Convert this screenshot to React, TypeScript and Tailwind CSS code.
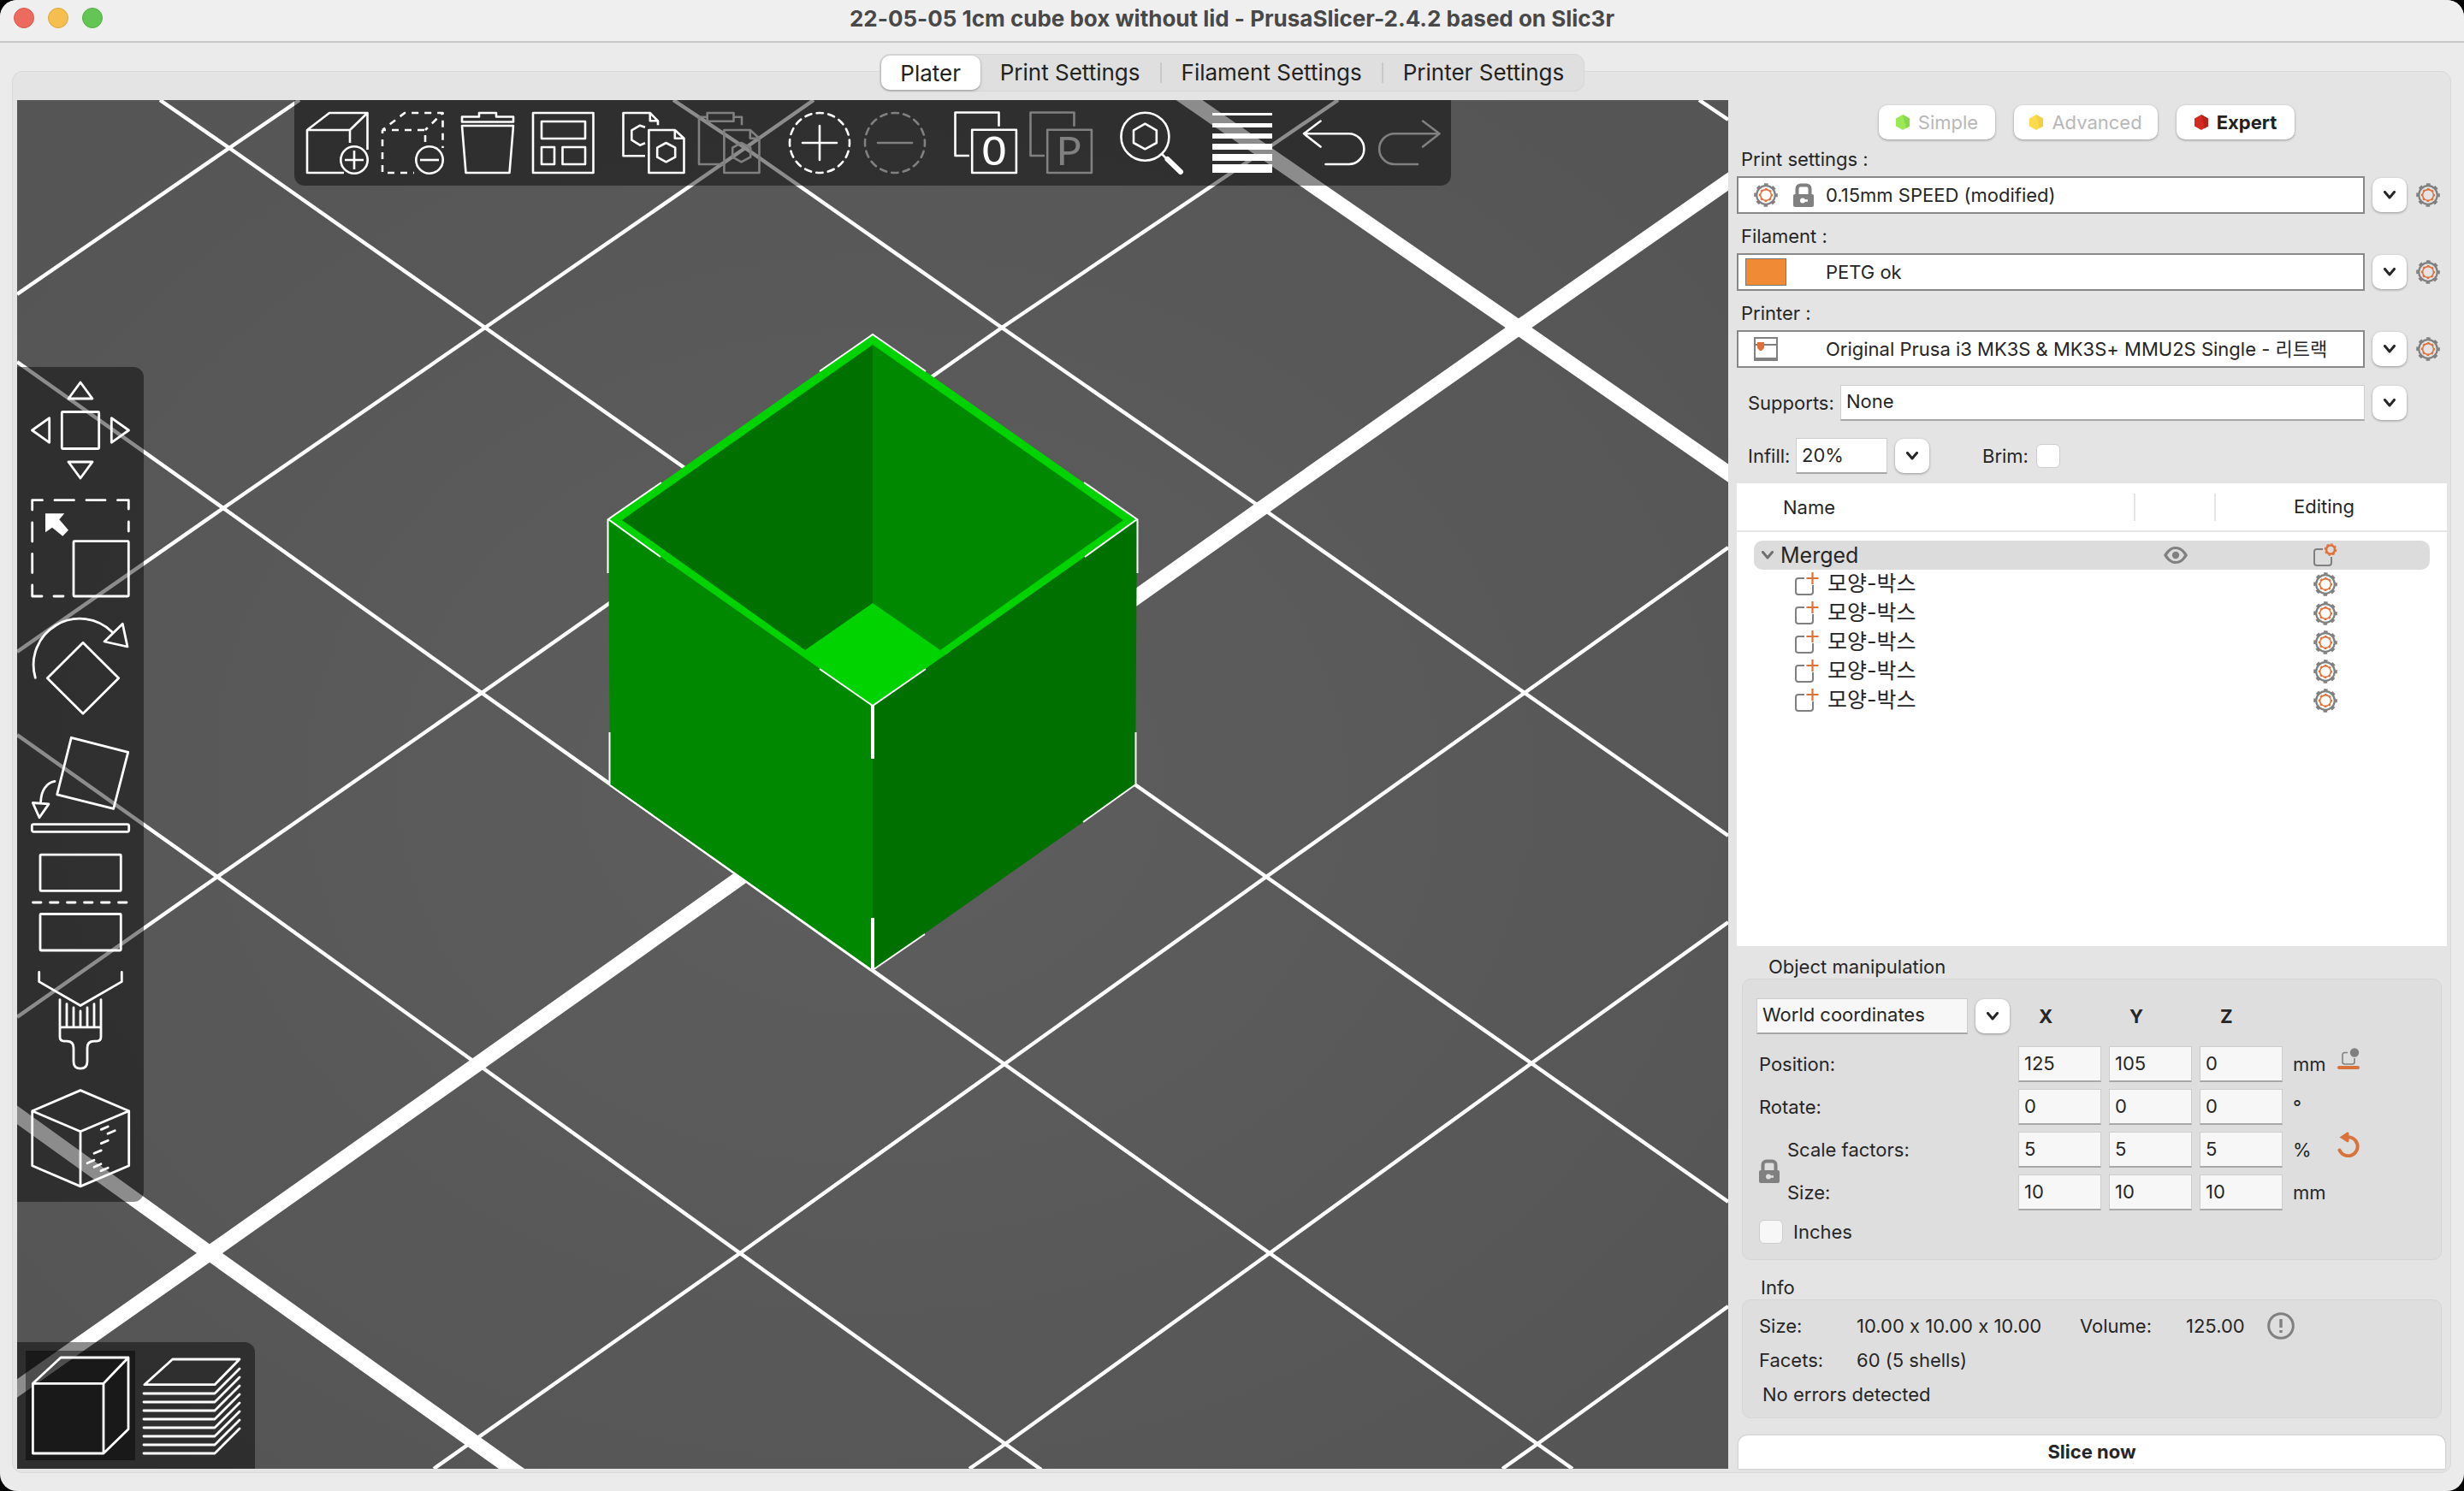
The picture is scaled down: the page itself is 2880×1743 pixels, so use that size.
import type { ReactNode } from 'react'
import clsx from 'clsx'

interface IconProps {
  children: ReactNode
  className?: string
}

/* ---------- Icons ---------- */

function TopIcon({ children, className }: IconProps) {
  return (
    <svg
      viewBox="0 0 72 72"
      className={clsx('size-[72px] overflow-visible', className)}
      fill="none"
      stroke="currentColor"
      strokeWidth="2.6"
      strokeLinejoin="round"
      aria-hidden
    >
      {children}
    </svg>
  )
}

function GizmoIcon({ children }: IconProps) {
  return (
    <svg
      viewBox="0 0 120 120"
      className="size-[120px] overflow-visible"
      fill="none"
      stroke="currentColor"
      strokeWidth="2.8"
      strokeLinecap="round"
      strokeLinejoin="round"
      aria-hidden
    >
      {children}
    </svg>
  )
}

const HEX = 'M50.5 36 61.2 41.7V52.7L50.5 58.3 40.2 52.7V41.7Z'
const PAGE = 'M60.8 21H30.4V71H71.5V30.7ZM60.8 21V30.7H71.5'

function Gear() {
  return (
    <svg viewBox="0 0 28 28" className="size-7 shrink-0" fill="none" aria-hidden>
      <circle cx="14" cy="14" r="10.8" stroke="#808080" strokeWidth="2.2" />
      <circle cx="14" cy="14" r="12.6" stroke="#808080" strokeWidth="2.4" strokeDasharray="4.6 5.296" strokeDashoffset="2.3" />
      <circle cx="14" cy="14" r="6.4" stroke="#e0703a" strokeWidth="1.6" />
      <circle cx="14" cy="14" r="7.4" stroke="#e0703a" strokeWidth="1.4" strokeDasharray="2.6 3.212" strokeDashoffset="1.3" />
    </svg>
  )
}

function Lock({ hole }: { hole: string }) {
  return (
    <svg viewBox="0 0 24 28" className="h-7 w-6 shrink-0" aria-hidden>
      <path d="M4.5 14V6.5a4 4 0 0 1 4-4h7a4 4 0 0 1 4 4V14" fill="none" stroke="#808080" strokeWidth="4" />
      <rect y="13" width="24" height="15" rx="2" fill="#808080" />
      <circle cx="11" cy="20.5" r="3" fill={hole} />
      <rect x="12" y="19.2" width="5" height="2.6" fill={hole} />
    </svg>
  )
}

function PrinterGlyph() {
  return (
    <svg viewBox="0 0 28 28" className="size-7 shrink-0" fill="none" aria-hidden>
      <path d="M1 0V28M27 0V28M0 1H28M1 9H27" stroke="#808080" strokeWidth="2" />
      <path d="M0 26H28" stroke="#808080" strokeWidth="4" />
      <path d="M4 6H12V13L9 16H7L4 13Z" fill="#e0703a" />
    </svg>
  )
}

function Eye() {
  return (
    <svg viewBox="0 0 28 20" className="h-5 w-7" aria-hidden>
      <path d="M0 10C4 3 9 0 14 0s10 3 14 10c-4 7-9 10-14 10S4 17 0 10Z" fill="#808080" />
      <path d="M4 10C7 5 10 3 14 3s7 2 10 7c-3 5-6 7-10 7S7 15 4 10Z" fill="#dcdcdc" />
      <circle cx="14" cy="10" r="4.2" fill="#808080" />
    </svg>
  )
}

function ObjectGlyph() {
  return (
    <svg viewBox="0 0 28 28" className="size-7" fill="none" aria-hidden>
      <path d="M11 7H4a3 3 0 0 0-3 3v13a3 3 0 0 0 3 3h14a3 3 0 0 0 3-3V16" stroke="#808080" strokeWidth="2" />
      <circle cx="20" cy="7.5" r="5" stroke="#e0703a" strokeWidth="2.6" />
      <circle cx="20" cy="7.5" r="6.6" stroke="#e0703a" strokeWidth="1.4" strokeDasharray="2.6 2.58" />
    </svg>
  )
}

function PartGlyph() {
  return (
    <svg viewBox="0 0 28 28" className="size-7" fill="none" aria-hidden>
      <path d="M11 7H4a3 3 0 0 0-3 3v13a3 3 0 0 0 3 3h14a3 3 0 0 0 3-3V15" stroke="#808080" strokeWidth="2" />
      <path d="M20.5 0V14M13.5 7H27.5" stroke="#e0703a" strokeWidth="2.2" />
    </svg>
  )
}

function DropToBedGlyph() {
  return (
    <svg viewBox="0 0 26 26" className="size-[26px]" fill="none" aria-hidden>
      <path d="M12 5.5H8.5A2.500 2.500 0 0 0 6 8v8.500A2.500 2.500 0 0 0 8.500 19h9A2.500 2.500 0 0 0 20 16.500V12" stroke="#808080" strokeWidth="1.6" />
      <circle cx="20" cy="5.5" r="5.2" fill="#808080" />
      <path d="M2 23H24" stroke="#d9733c" strokeWidth="4" strokeLinecap="round" />
    </svg>
  )
}

function ResetGlyph() {
  return (
    <svg viewBox="0 0 26 30" className="h-[30px] w-[26px]" fill="none" aria-hidden>
      <path d="M10 6.5A11 11 0 1 1 2.5 21.5" stroke="#d9733c" strokeWidth="4" strokeLinecap="round" />
      <path d="M2.5 6.5 11.5 .5Q13.5 0 13.5 2V11Q13 13 11 12Z" fill="#d9733c" />
    </svg>
  )
}

function Chevron({ className }: { className?: string }) {
  return (
    <svg viewBox="0 0 14 10" className={clsx('h-[10px] w-[14px]', className)} fill="none" aria-hidden>
      <path d="M1.5 1.5 7 8 12.5 1.5" stroke="currentColor" strokeWidth="3" strokeLinecap="round" strokeLinejoin="round" />
    </svg>
  )
}

/* ---------- 3D scene ---------- */

const THIN_LINES = [
  'M0 742 234 908 845 1348 1155 1571 1197 1601',
  'M0 306 241 477 543 693 1154 1127 1464 1348 1777 1571 1818 1600',
  'M167 0 248 56 547 266 1460 908 1770 1126 2000 1288',
  'M767 0 851 56 1151 266 1455 477 1762 693 2000 860',
  'M1966 0 2000 23',
  'M0 227 248 56 330 0',
  'M0 645 241 477 547 266 851 56 931 0',
  'M0 1072 234 908 543 693 1151 266 1462 56 1544 0',
  'M487 1600 845 1348 1154 1127 1460 908 1762 693 2000 523',
  'M1113 1600 1155 1571 1464 1348 1770 1126 2000 961',
  'M1736 1600 1777 1571 2000 1410',
]

const THICK_LINES = [
  'M-20 1172 225 1348 578 1600 620 1630',
  'M1341 -20 1370 0 1755 266 2020 450',
  'M-20 1520 225 1348 538 1127 1455 477 1755 266 2020 81',
]

function Scene() {
  return (
    <svg
      viewBox="0 0 2000 1600"
      preserveAspectRatio="xMidYMid slice"
      className="absolute inset-0 size-full"
      fill="none"
      role="img"
      aria-label="Print bed with a green open box"
    >
      <defs>
        <radialGradient id="bed" cx="50%" cy="50%" r="65%">
          <stop offset="0" stopColor="#5e5e5e" />
          <stop offset="1" stopColor="#555555" />
        </radialGradient>
      </defs>
      <rect width="2000" height="1600" fill="url(#bed)" />
      <g stroke="#fff" strokeWidth="4.4">
        {THIN_LINES.map((d) => <path key={d} d={d} />)}
      </g>
      <g stroke="#fff" strokeWidth="17.5">
        {THICK_LINES.map((d) => <path key={d} d={d} />)}
      </g>

      {/* Box */}
      <path d="M691 491 1000 708V1017L693 800Z" fill="#008800" />
      <path d="M1309 491 1000 708V1017L1307 801Z" fill="#007000" />
      <path d="M1000 274 1309 491 1000 708 691 491Z" fill="#00d300" />
      <path d="M1000 286 707 491 921 643 1000 588Z" fill="#007000" />
      <path d="M1000 286 1293 491 1079 643 1000 588Z" fill="#008800" />

      {/* Selection corners */}
      <g stroke="#fff" strokeWidth="2">
        <path d="M938 317 1000 274 1062 317" />
        <path d="M753 447 691 490 752 534M690.5 490V553" />
        <path d="M1247 447 1309 490 1248 534M1309.5 490V553" />
        <path d="M692.5 739V800M1307.5 739V800L1246 844" />
        <path d="M938 665 1000 708 1062 665M1061 975 1000 1017" />
        <path d="M693 801 1000 1018" />
        <path d="M1000 708V770M1000 956V1017" strokeWidth="4" />
      </g>
    </svg>
  )
}

/* ---------- Toolbars ---------- */

function ToolButton({ label, disabled, children }: { label: string; disabled?: boolean; children: ReactNode }) {
  return (
    <button
      type="button"
      aria-label={label}
      disabled={disabled}
      className={clsx('block', disabled ? 'text-[#808080]' : 'text-white')}
    >
      {children}
    </button>
  )
}

function Gap() {
  return <span className="w-[2px]" />
}

function SplitIcon({ letter }: { letter: string }) {
  return (
    <TopIcon>
      <path d="M17 51H.5V.5H51.5V16.7M20.2 20.7H71.9V71H20.2Z" />
      <text
        x="46"
        y="62"
        textAnchor="middle"
        fontSize="50"
        fill="currentColor"
        stroke="none"
        className="font-['Liberation_Mono',monospace]"
      >
        {letter}
      </text>
    </TopIcon>
  )
}

function TopToolbar() {
  return (
    <div role="toolbar" aria-label="Objects" className="flex gap-4 rounded-b-xl bg-black/45 p-[14px]">
      <ToolButton label="Add">
        <TopIcon>
          <path d="M44 71H1V21H51V36M1 21 27 1H71.5V44M51 21 71.5 1" />
          <circle cx="56" cy="56" r="15.7" />
          <path d="M45 56H67M56 45V67" />
        </TopIcon>
      </ToolButton>
      <ToolButton label="Delete">
        <TopIcon>
          <path d="M1 21V71H38" strokeDasharray="8 7" strokeDashoffset="4" />
          <path d="M1 21 27 1H71.5V42" strokeDasharray="8 7" strokeDashoffset="4" />
          <path d="M1 21H51V36M51 21 71.5 1" strokeDasharray="8 7" strokeDashoffset="4" />
          <circle cx="56" cy="56" r="15.7" />
          <path d="M45 56H67" />
        </TopIcon>
      </ToolButton>
      <ToolButton label="Delete all">
        <TopIcon>
          <path d="M6 11.5V5.5H26V1H46V5.5H66V11.5ZM6 16H66L61.5 71H10.5Z" />
        </TopIcon>
      </ToolButton>
      <ToolButton label="Arrange">
        <TopIcon>
          <path d="M1 1H71.5V71H1ZM11 11H62V31H11ZM11 41H26V61H11ZM35.5 41H62V61H35.5Z" />
        </TopIcon>
      </ToolButton>
      <Gap />
      <ToolButton label="Copy">
        <TopIcon>
          <path d="M26 51.3H.5V1H31.8L41 10.3V15.3M31.8 1V10.3H41" />
          <path d="M26 17.7 20 15.7 10.3 21.3V32.7L20 38.7 26 36.3" />
          <path d={PAGE} />
          <path d={HEX} />
        </TopIcon>
      </ToolButton>
      <ToolButton label="Paste" disabled>
        <TopIcon>
          <path d="M29.5 61H1V5.7H10.7M41.5 5.7H51V15.3M10.7 1H41.5V10.7H10.7Z" />
          <path d={PAGE} />
          <path d={HEX} />
        </TopIcon>
      </ToolButton>
      <Gap />
      <ToolButton label="Add instance">
        <TopIcon>
          <circle cx="36" cy="36" r="35" strokeDasharray="7.5 6.244" strokeDashoffset="3.75" strokeLinecap="round" />
          <path d="M16 36H56M36 16V56" strokeLinecap="round" />
        </TopIcon>
      </ToolButton>
      <ToolButton label="Remove instance" disabled>
        <TopIcon>
          <circle cx="36" cy="36" r="35" strokeDasharray="7.5 6.244" strokeDashoffset="3.75" strokeLinecap="round" />
          <path d="M16 36H56" strokeLinecap="round" />
        </TopIcon>
      </ToolButton>
      <Gap />
      <ToolButton label="Split to objects"><SplitIcon letter="O" /></ToolButton>
      <ToolButton label="Split to parts" disabled><SplitIcon letter="P" /></ToolButton>
      <Gap />
      <ToolButton label="Search">
        <TopIcon>
          <circle cx="28.4" cy="28.7" r="28" />
          <path d="M28.4 13.7 41.8 21.3V36L28.4 43.3 15 36V21.3Z" />
          <path d="M48 49 54 55" />
          <path d="M54.5 55 70 70" strokeWidth="6" strokeLinecap="round" />
        </TopIcon>
      </ToolButton>
      <Gap />
      <ToolButton label="Variable layer height">
        <TopIcon>
          <path
            d="M1 1H71V4H1ZM1 13H71V18H1ZM1 25H71V31H1ZM1 37H71V44H1ZM1 49H71V57H1ZM1 61H71V71H1Z"
            fill="currentColor"
            stroke="none"
          />
        </TopIcon>
      </ToolButton>
      <Gap />
      <ToolButton label="Undo">
        <TopIcon>
          <path d="M21.5 10.5 2 25.3 21.5 40.5M2 25.3H54.5A17.8 17.8 0 0 1 54.5 61H27.5" strokeLinecap="round" />
        </TopIcon>
      </ToolButton>
      <ToolButton label="Redo" disabled>
        <TopIcon>
          <path d="M53 10.5 72.5 25.3 53 40.5M72.5 25.3H20A17.8 17.8 0 0 0 20 61H47" strokeLinecap="round" />
        </TopIcon>
      </ToolButton>
    </div>
  )
}

function GizmoToolbar() {
  return (
    <div role="toolbar" aria-label="Gizmos" className="flex flex-col gap-[18px] rounded-r-xl bg-black/45 p-[14px]">
      <ToolButton label="Move">
        <GizmoIcon>
          <rect x="38.3" y="38.5" width="43.4" height="43" rx="1" />
          <path d="M60 4 46 23H74ZM60 116 46 97H74ZM3.5 60 23.7 45.7V74.3ZM116.5 60 96.3 45.7V74.3Z" />
        </GizmoIcon>
      </ToolButton>
      <ToolButton label="Scale">
        <GizmoIcon>
          <rect x="52" y="51.7" width="64.3" height="64.3" rx="1" />
          <path d="M3.7 15V3.7H15.5M30 3.7H52.5M67 3.7H89M103.5 3.7H116.3V14M116.3 29V40M3.7 30V52M3.7 66.5V88.5M3.7 103V116H15M29 116H40" />
          <path d="M19 19.3H41.3L35.3 26.3 46 38.7 39.3 45.7 27 35.7 19 41.3Z" fill="currentColor" stroke="none" />
        </GizmoIcon>
      </ToolButton>
      <ToolButton label="Rotate">
        <GizmoIcon>
          <path d="M63 32.3 104.7 73.7 63 115.3 21.3 73.7Z" />
          <path d="M7.3 73.3A54 54 0 0 1 97.3 20" />
          <path d="M109.3 10.3 115 37 88 31Z" />
        </GizmoIcon>
      </ToolButton>
      <ToolButton label="Place on face">
        <GizmoIcon>
          <path d="M49.3 5.3 115.7 22.3 98.7 88.4 32.7 71.9Z" />
          <path d="M30 56.4C20 58 14 68 13.7 80M4.3 81.5 23 82.9 12 98.8Z" />
          <rect x="3.3" y="106.7" width="113.4" height="8.6" rx="2" />
        </GizmoIcon>
      </ToolButton>
      <ToolButton label="Cut">
        <GizmoIcon>
          <rect x="13" y="4.1" width="94.3" height="42.3" rx="1" />
          <rect x="13" y="73.5" width="94.3" height="42.5" rx="1" />
          <path d="M4.5 60H115" strokeDasharray="9.5 10.5" />
        </GizmoIcon>
      </ToolButton>
      <ToolButton label="Paint-on supports">
        <GizmoIcon>
          <path d="M11.7 3.5V14.6L60 42.5 108.3 14.6V3.5" />
          <path d="M36 35.6V79.3Q36 84.1 41 84.1H44Q52 84.1 52 92V108Q52 116.1 60 116.1T68 108V92Q68 84.1 76 84.1H79Q84 84.1 84 79.3V35.6M36 67.9H84" />
          <path d="M44 40.7V67M52 44.9V67M60 49V67M68 44.9V67M76 40.7V67" />
        </GizmoIcon>
      </ToolButton>
      <ToolButton label="Seam painting">
        <GizmoIcon>
          <path d="M60 3.6 3.7 27.7V91.8L60 115.9 116.7 91.8V27.7ZM3.7 27.7 60 51.8 116.7 27.7M60 51.8V115.9" />
          <path d="M84.3 49.4 92.3 46M92 54.3 100.3 50.8M84.3 65.6 92.3 62.2M76 77.3 84.3 73.9M68 88.7 76 85.2M76 93.2 84 89.7M84 97.6 92.3 94.2" />
        </GizmoIcon>
      </ToolButton>
    </div>
  )
}

function ViewToolbar() {
  const layers = [50, 60, 70, 80, 90, 100, 110, 120]
  return (
    <div role="toolbar" aria-label="View" className="flex gap-[2px] rounded-tr-xl bg-black/45 p-[10px] text-white">
      <button type="button" aria-label="3D editor view" aria-pressed="true" className="bg-black/45">
        <svg viewBox="0 0 128 128" className="size-32" fill="none" stroke="currentColor" strokeWidth="2.8" strokeLinejoin="round" aria-hidden>
          <path d="M8.4 38.3H91V120H8.4ZM8.4 38.3 41 8H120L91 38.3M120 8V91.7L91 120" />
        </svg>
      </button>
      <button type="button" aria-label="Preview">
        <svg viewBox="0 0 128 128" className="size-32" fill="none" stroke="currentColor" strokeWidth="2.8" strokeLinecap="round" strokeLinejoin="round" aria-hidden>
          <path d="M8.8 39.7 41.7 10H120L91 39.7Z" />
          {layers.map((y) => <path key={y} d={`M8 ${y}H91L120 ${y - 29}`} />)}
        </svg>
      </button>
    </div>
  )
}

/* ---------- Sidebar controls ---------- */

const RAISED = 'bg-white shadow-[0_1px_3px_rgba(0,0,0,0.35)]'
const FIELD = 'border border-[#cdcdcd] border-b-2 border-b-[#a8a8a8] outline-none'

function DropButton({ label, muted }: { label: string; muted?: boolean }) {
  return (
    <button
      type="button"
      aria-label={label}
      className={clsx('flex h-10 w-10 shrink-0 items-center justify-center rounded-[10px]', RAISED, muted && 'bg-[#f7f7f7]')}
    >
      <Chevron />
    </button>
  )
}

interface PresetProps {
  id: string
  label: string
  value: string
  icon: ReactNode
  first?: boolean
}

function PresetRow({ id, label, value, icon, first }: PresetProps) {
  return (
    <div className={first ? 'mt-[9px]' : 'mt-3'}>
      <label htmlFor={id} className="block pl-[5px] leading-7">{label}</label>
      <div className="mt-[6px] flex items-center">
        <div className="grid h-11 flex-1 grid-cols-[102px_1fr] items-center border-2 border-[#888888] bg-white">
          <div className="flex items-center">{icon}</div>
          <select id={id} className="h-full min-w-0 appearance-none bg-transparent outline-none">
            <option>{value}</option>
          </select>
        </div>
        <span className="ml-[9px]"><DropButton label={`Choose ${id}`} /></span>
        <button type="button" aria-label={`Edit ${id}`} className="mr-2 ml-[11px]"><Gear /></button>
      </div>
    </div>
  )
}

const MODES = [
  { name: 'Simple', light: '#9bea55', dark: '#86d94a', width: 'w-[136px]' },
  { name: 'Advanced', light: '#fbdb4b', dark: '#f3cf45', width: 'w-[168px]' },
  { name: 'Expert', light: '#d42a20', dark: '#b8231a', width: 'w-[138px]' },
]

function ModeButtons() {
  return (
    <div className="mt-[6px] flex gap-[22px] pl-[166px]">
      {MODES.map(({ name, light, dark, width }) => (
        <button
          key={name}
          type="button"
          className={clsx(
            'flex h-10 items-center justify-center gap-[10px] rounded-[10px]',
            RAISED,
            width,
            name === 'Expert' ? 'font-bold text-[#222222]' : 'text-[#b8b8b8]',
          )}
        >
          <svg viewBox="0 0 16 18" className="h-[18px] w-4" aria-hidden>
            <path d="M8 0 16 4.5V13.5L8 18 0 13.5V4.5Z" fill={light} />
            <path d="M8 0 16 4.5V13.5L12 16Z" fill={dark} />
          </svg>
          {name}
        </button>
      ))}
    </div>
  )
}

function ObjectList() {
  const parts = ['모양-박스', '모양-박스', '모양-박스', '모양-박스', '모양-박스']
  return (
    <div className="mt-[11px] min-h-0 flex-1 bg-white">
      <table className="w-full table-fixed border-collapse text-left">
        <colgroup>
          <col />
          <col className="w-[94px]" />
          <col className="w-[270px]" />
        </colgroup>
        <thead>
          <tr className="h-14 border-b-2 border-[#e5e5e5]">
            <th className="p-0 font-normal">
              <div className="border-r-2 border-[#e5e5e5] pl-[54px] leading-8">Name</div>
            </th>
            <th className="p-0" aria-label="Visibility">
              <div className="h-8 border-r-2 border-[#e5e5e5]" />
            </th>
            <th className="p-0 pl-[91px] font-normal">Editing</th>
          </tr>
        </thead>
        <tbody>
          <tr className="h-[11px]" aria-hidden><td colSpan={3} className="p-0" /></tr>
          <tr>
            <td className="p-0 pl-5">
              <div className="flex h-[34px] items-center gap-2 rounded-l-[10px] bg-[#dcdcdc] pl-[9px] text-[25px]">
                <Chevron className="text-[#707070]" />
                <span className="pt-[2px]">Merged</span>
              </div>
            </td>
            <td className="p-0">
              <div className="flex h-[34px] items-center justify-center bg-[#dcdcdc]"><Eye /></div>
            </td>
            <td className="p-0 pr-5">
              <div className="flex h-[34px] items-center rounded-r-[10px] bg-[#dcdcdc] pl-[114px]"><ObjectGlyph /></div>
            </td>
          </tr>
          {parts.map((name, i) => (
            <tr key={i}>
              <td className="p-0">
                <div className="flex h-[34px] items-center gap-[10px] pl-[68px] text-[25px]">
                  <PartGlyph />
                  {name}
                </div>
              </td>
              <td />
              <td className="p-0"><div className="pl-[114px]"><Gear /></div></td>
            </tr>
          ))}
        </tbody>
      </table>
    </div>
  )
}

function AxisInputs({ name, values }: { name: string; values: string[] }) {
  return (
    <>
      {values.map((v, i) => (
        <input
          key={i}
          aria-label={`${name} ${'XYZ'[i]}`}
          defaultValue={v}
          className={clsx('h-[42px] min-w-0 bg-[#f7f7f7] px-[6px] pb-[2px]', FIELD)}
        />
      ))}
    </>
  )
}

function ObjectManipulation() {
  return (
    <section className="mt-[10px]">
      <h2 className="pl-[37px] leading-7">Object manipulation</h2>
      <div className="mr-[6px] ml-[6px] rounded-[10px] border border-[#d5d5d5] bg-[#dedede] pt-[22px] pb-[18px] pl-4">
        <div className="grid grid-cols-[297px_97px_97px_97px] items-center gap-x-[9px] font-bold">
          <div className="flex items-center gap-[9px]">
            <select aria-label="Coordinates" className={clsx('h-[42px] w-[247px] appearance-none bg-[#f7f7f7] px-[6px] pb-[2px] font-normal', FIELD)}>
              <option>World coordinates</option>
            </select>
            <DropButton label="Choose coordinates" muted />
          </div>
          <span className="pl-6">X</span>
          <span className="pl-6">Y</span>
          <span className="pl-6">Z</span>
        </div>
        <div className="mt-[14px] grid grid-cols-[24px_264px_97px_97px_97px_46px_1fr] items-center gap-x-[9px] gap-y-2">
          <span className="col-span-2 pl-[3px]">Position:</span>
          <AxisInputs name="Position" values={['125', '105', '0']} />
          <span className="pl-[3px]">mm</span>
          <button type="button" aria-label="Drop to bed" className="self-start justify-self-start pt-[2px]"><DropToBedGlyph /></button>

          <span className="col-span-2 pl-[3px]">Rotate:</span>
          <AxisInputs name="Rotate" values={['0', '0', '0']} />
          <span className="col-span-2 pl-[3px]">°</span>

          <button type="button" aria-label="Lock scaling" className="row-span-2 pl-[3px]"><Lock hole="#dedede" /></button>
          <span className="pl-[3px]">Scale factors:</span>
          <AxisInputs name="Scale" values={['5', '5', '5']} />
          <span className="pl-[3px]">%</span>
          <button type="button" aria-label="Reset scale" className="self-start justify-self-start"><ResetGlyph /></button>

          <span className="pl-[3px]">Size:</span>
          <AxisInputs name="Size" values={['10', '10', '10']} />
          <span className="col-span-2 pl-[3px]">mm</span>
        </div>
        <label className="mt-[11px] flex items-center gap-3 pl-[3px] leading-7">
          <input type="checkbox" className="size-7 appearance-none rounded-md border border-[#cdcdcd] bg-[#f7f7f7]" />
          Inches
        </label>
      </div>
    </section>
  )
}

function Info() {
  return (
    <section className="mt-[18px]">
      <h2 className="pl-7 leading-7">Info</h2>
      <dl className="mr-[6px] ml-[6px] grid grid-cols-[114px_261px_124px_95px_1fr] items-center rounded-[10px] border border-[#d5d5d5] bg-[#dedede] pt-[10px] pb-[7px] pl-[19px] leading-10">
        <dt>Size:</dt>
        <dd>10.00 x 10.00 x 10.00</dd>
        <dt>Volume:</dt>
        <dd>125.00</dd>
        <dd>
          <svg viewBox="0 0 32 32" className="size-8" fill="none" stroke="#808080" strokeWidth="3" role="img" aria-label="Mesh notice">
            <circle cx="16" cy="16" r="14.3" />
            <path d="M16 8V18M16 21V24" strokeWidth="3.4" />
          </svg>
        </dd>
        <dt>Facets:</dt>
        <dd className="col-span-4">60 (5 shells)</dd>
        <dd className="col-span-5 pl-1">No errors detected</dd>
      </dl>
    </section>
  )
}

function Sidebar() {
  return (
    <aside className="flex w-[844px] shrink-0 flex-col pr-1 pl-[10px] text-[22px]">
      <ModeButtons />
      <PresetRow
        first
        id="print-settings"
        label="Print settings :"
        value="0.15mm SPEED (modified)"
        icon={<span className="flex gap-[18px] pl-[18px]"><Gear /><Lock hole="#ffffff" /></span>}
      />
      <PresetRow
        id="filament"
        label="Filament :"
        value="PETG ok"
        icon={<span className="ml-2 h-8 w-12 border border-[#777777] bg-[#f08a34]" />}
      />
      <PresetRow
        id="printer"
        label="Printer :"
        value="Original Prusa i3 MK3S & MK3S+ MMU2S Single - 리트랙"
        icon={<span className="pl-[18px]"><PrinterGlyph /></span>}
      />

      <div className="mt-5 flex items-center pl-[13px]">
        <label htmlFor="supports" className="w-[108px]">Supports:</label>
        <select id="supports" className={clsx('h-[42px] flex-1 appearance-none bg-white px-[6px] pb-[2px]', FIELD)}>
          <option>None</option>
        </select>
        <span className="mr-[47px] ml-[9px]"><DropButton label="Choose supports" /></span>
      </div>

      <div className="mt-5 flex items-center pl-[13px]">
        <label htmlFor="infill" className="w-14">Infill:</label>
        <input id="infill" defaultValue="20%" className={clsx('mr-[9px] h-[42px] w-[107px] bg-white px-[6px] pb-[2px]', FIELD)} />
        <DropButton label="Choose infill" />
        <label htmlFor="brim" className="ml-[62px] w-[63px]">Brim:</label>
        <input id="brim" type="checkbox" className="size-7 appearance-none rounded-md border border-[#cdcdcd] bg-white" />
      </div>

      <ObjectList />
      <ObjectManipulation />
      <Info />
      <button type="button" className="mt-5 mr-[2px] ml-[2px] h-[39px] rounded-t-[10px] bg-white font-bold shadow-[0_0_2px_rgba(0,0,0,0.3)]">
        Slice now
      </button>
    </aside>
  )
}

/* ---------- Window ---------- */

function Tabs() {
  const tabs = ['Print Settings', 'Filament Settings', 'Printer Settings']
  return (
    <nav className="relative z-10 mt-[13px] -mb-6 flex h-11 items-center self-center rounded-xl border border-[#d6d6d6] bg-[#dfdfdf] pl-px text-[26px] text-[#222222]">
      <button type="button" aria-current="page" className={clsx('h-10 w-[116px] rounded-[10px]', RAISED)}>Plater</button>
      {tabs.map((tab, i) => (
        <button
          key={tab}
          type="button"
          className={clsx('h-6 px-[23px] leading-6', i < tabs.length - 1 && 'border-r-2 border-[#c9c9c9]')}
        >
          {tab}
        </button>
      ))}
    </nav>
  )
}

export default function App() {
  return (
    <div className="h-screen bg-black font-[Inter,'Noto_Sans_CJK_KR',sans-serif] text-[#262626] [font-feature-settings:'calt'_0]">
      <div className="flex h-full flex-col overflow-hidden rounded-[20px] bg-[#ebebeb]">
        <header className="flex h-[50px] shrink-0 items-center border-b-2 border-[#c8c8c8] bg-[#efefef] px-4 pb-[6px]">
          <div className="flex w-28 gap-4">
            <button type="button" aria-label="Close" className="size-6 rounded-full border border-[#d8564b] bg-[#ed6a5e]" />
            <button type="button" aria-label="Minimize" className="size-6 rounded-full border border-[#dba63c] bg-[#f5bf4f]" />
            <button type="button" aria-label="Zoom" className="size-6 rounded-full border border-[#53ae41] bg-[#62c554]" />
          </div>
          <h1 className="flex-1 text-center text-[26px] font-bold text-[#484848]">
            22-05-05 1cm cube box without lid - PrusaSlicer-2.4.2 based on Slic3r
          </h1>
          <div className="w-28" />
        </header>

        <Tabs />

        <div className="mr-[15px] mb-[21px] ml-[14px] flex min-h-0 flex-1 rounded-xl border border-[#d8d8d8] bg-[#e4e4e4] pt-[33px] pb-1 pl-[5px]">
          <main className="relative min-w-0 flex-1 overflow-hidden">
            <Scene />
            <div className="absolute inset-x-0 top-0 flex justify-center"><TopToolbar /></div>
            <div className="absolute top-[312px] left-0"><GizmoToolbar /></div>
            <div className="absolute bottom-0 left-0"><ViewToolbar /></div>
          </main>
          <Sidebar />
        </div>
      </div>
    </div>
  )
}
